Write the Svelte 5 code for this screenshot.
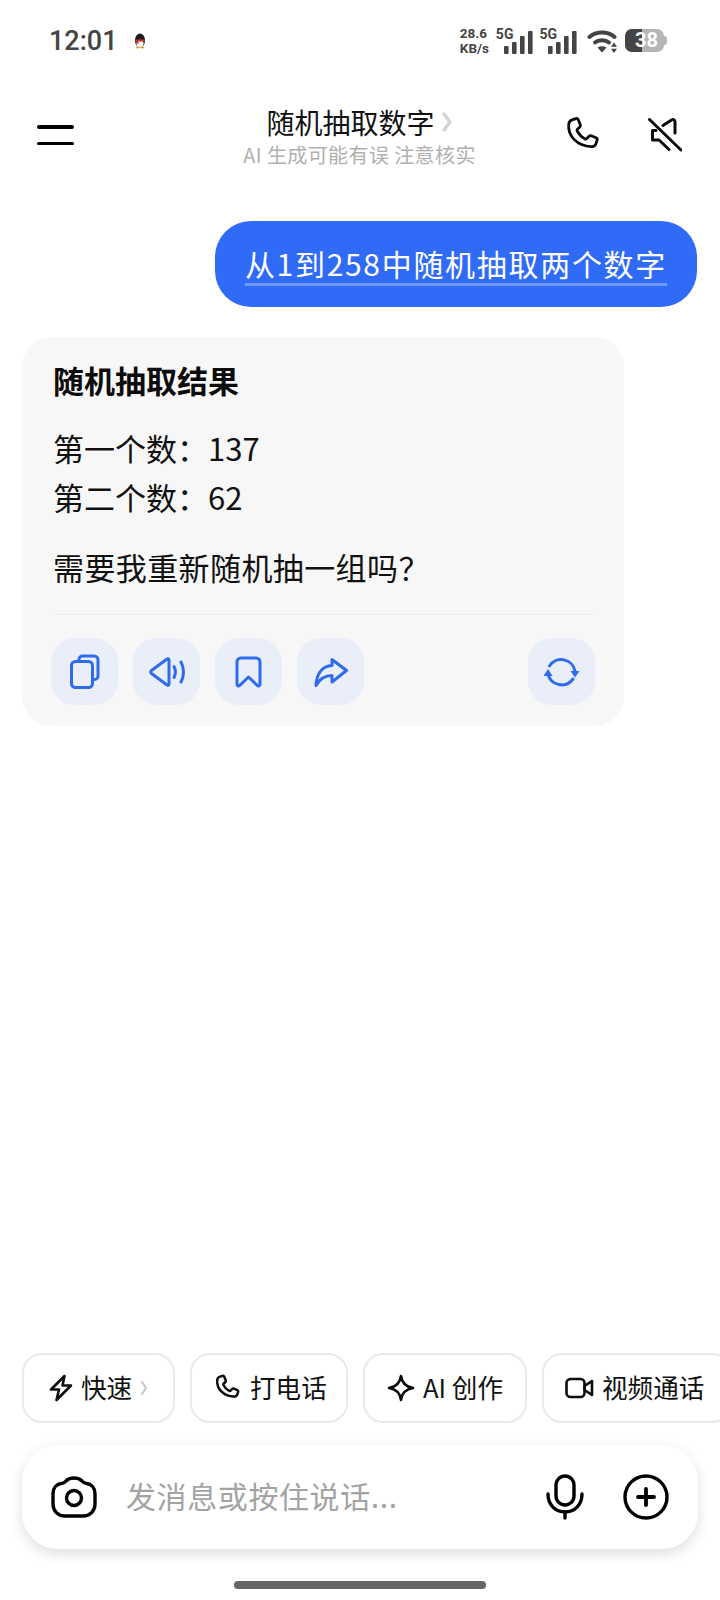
<script lang="ts">
  // Chat screen: status bar, header, conversation, quick chips, composer
  const actions = ['copy', 'speaker', 'bookmark', 'share'];
  const bars = [
    { x: 0, h: 8 },
    { x: 8, h: 12 },
    { x: 16, h: 18 },
    { x: 24, h: 23 }
  ];
</script>

{#snippet signal()}
  <div class="sim">
    <span class="five">5G</span>
    <svg class="bars" width="29" height="23" viewBox="0 0 29 23" fill="#444">
      {#each bars as bar}
        <rect x={bar.x} y={23 - bar.h} width="4.6" height={bar.h} rx="1" />
      {/each}
    </svg>
  </div>
{/snippet}

<div class="screen">
  <div class="status">
    <div class="status-left">
      <span class="time">12:01</span>
      <svg class="qq" width="22" height="22" viewBox="0 0 22 22">
        <circle cx="11" cy="11" r="10.5" fill="#fff" />
        <ellipse cx="11" cy="10.5" rx="5" ry="7" fill="#1c1c1c" />
        <ellipse cx="11" cy="13.6" rx="3.6" ry="3.8" fill="#f6f2ea" />
        <rect x="6" y="9.4" width="10" height="2.2" rx="1" fill="#c5352b" />
        <rect x="7.4" y="11" width="2" height="2.6" fill="#c5352b" />
        <ellipse cx="8.6" cy="17.6" rx="2" ry="0.9" fill="#e0a030" />
        <ellipse cx="13.4" cy="17.6" rx="2" ry="0.9" fill="#e0a030" />
      </svg>
    </div>
    <div class="status-right">
      <div class="speed"><span>28.6</span><span>KB/s</span></div>
      {@render signal()}
      {@render signal()}
      <svg class="wifi" width="30" height="24" viewBox="0 0 30 24" fill="none" stroke="#444" stroke-width="4" stroke-linecap="round">
        <path d="M2.500 8C9 2 21 2 27.500 8" />
        <path d="M8 13.500C11.500 10.500 18.500 10.500 22 13.500" />
        <path d="M15 23.500l-4.500-5c2.700-1.800 6.300-1.800 9 0z" fill="#444" stroke="none" />
        <path d="M27 13.500l3 4.200h-6zM27 24l3-4.200h-6z" fill="#444" stroke="none" />
      </svg>
      <div class="battery"><span class="fill"></span><span class="level">38</span><span class="nub"></span></div>
    </div>
  </div>

  <header class="topbar">
    <button class="menu" aria-label="菜单"><span></span><span></span></button>
    <div class="heading">
      <div class="title">随机抽取数字<svg width="12" height="22" viewBox="0 0 12 22" fill="none" stroke="#d4d4d4" stroke-width="3.400" stroke-linecap="round" stroke-linejoin="round"><path d="M3 3l6 8-6 8" /></svg></div>
      <div class="subtitle">AI 生成可能有误 注意核实</div>
    </div>
    <div class="top-actions">
      <svg width="38" height="38" viewBox="0 0 38 38" fill="none" stroke="#0c0c0c" stroke-width="2.800" stroke-linejoin="round"><path d="M9.600 3.600l3.400-1c1-.3 1.900.2 2.300 1.100l2 5c.3.8.1 1.600-.5 2.200l-2.400 2.300c-.5.5-.6 1.100-.3 1.700 1.900 3.700 4.400 6.200 8 8 .6.300 1.200.2 1.700-.3l2.300-2.400c.6-.6 1.500-.7 2.200-.4l4.700 2c1 .4 1.400 1.400 1.100 2.400l-1 3.200c-.7 2.100-2.600 3.500-4.800 3.300C14 30 4.700 20 5.700 8.400c.2-2.300 1.800-4.200 3.900-4.800z" /></svg>
      <svg width="34" height="34" viewBox="0 0 34 34" fill="none" stroke="#0c0c0c" stroke-width="3" stroke-linecap="round" stroke-linejoin="round"><path d="M1.500 1.500L33 32" /><path d="M15 7.500l8.500-5.500c1.800-1 3.500 0 3.500 2v11" /><path d="M8 12.500H4.500V22H11l10 9.500" /></svg>
    </div>
  </header>

  <main class="chat">
    <div class="bubble"><span>从1到258中随机抽取两个数字</span></div>

    <section class="answer">
      <h2>随机抽取结果</h2>
      <div class="lines">
        <p>第一个数：137</p>
        <p>第二个数：62</p>
      </div>
      <p class="ask">需要我重新随机抽一组吗？</p>
      <div class="divider"></div>
      <div class="toolbar">
        {#each actions as name}
          <button class="tool" aria-label={name}>
            {#if name === 'copy'}
              <svg width="30" height="35" viewBox="0 0 30 35" fill="none" stroke="#2f6bed" stroke-width="3" stroke-linejoin="round" stroke-linecap="round"><rect x="1.500" y="7.500" width="21" height="26" rx="4" /><path d="M9 7.500V5.500A3.500 3.500 0 0 1 12.500 2H24a4 4 0 0 1 4 4v16a3.500 3.500 0 0 1-3.500 3.500h-2" /></svg>
            {:else if name === 'speaker'}
              <svg width="36" height="32" viewBox="0 0 36 32" fill="none" stroke="#2f6bed" stroke-width="3" stroke-linejoin="round" stroke-linecap="round"><path d="M2.500 14.500L18 3c1-.6 2 0 2 1v24c0 1-1 1.600-2 1L2.500 17.500c-1-.8-1-2.200 0-3z" /><path d="M25 10.500c1.800 3.500 1.800 7.500 0 11" /><path d="M32 6c3.300 6 3.300 14 0 20" /></svg>
            {:else if name === 'bookmark'}
              <svg width="27" height="32" viewBox="0 0 27 32" fill="none" stroke="#2f6bed" stroke-width="3" stroke-linejoin="round" stroke-linecap="round"><path d="M2 6a4 4 0 0 1 4-4h15a4 4 0 0 1 4 4v22c0 2-1.500 2.500-2.800 1.300L13.500 21 4.800 29.300C3.500 30.500 2 30 2 28z" /></svg>
            {:else}
              <svg width="34" height="30" viewBox="0 0 34 30" fill="none" stroke="#2f6bed" stroke-width="3" stroke-linejoin="round" stroke-linecap="round"><path d="M18 2.500L32.500 13.500 18 25v-6.500C11 18.500 6 21.500 2 28.500 2.500 17 8 9 18 8.500z" /></svg>
            {/if}
          </button>
        {/each}
        <button class="tool refresh" aria-label="refresh">
          <svg width="38" height="32" viewBox="0 0 38 32" fill="none" stroke="#2f6bed" stroke-width="3" stroke-linecap="round"><path d="M6.500 10A14 14 0 0 1 32 15" /><path d="M30 23A14 14 0 0 1 5 18" /><path d="M27.500 15h9l-4.500 6.500zM.5 20h9L5 13z" fill="#2f6bed" stroke="none" /></svg>
        </button>
      </div>
    </section>
  </main>

  <div class="chips">
    <div class="chip fast">
      <svg width="24" height="28" viewBox="0 0 24 28" fill="none" stroke="#0c0c0c" stroke-width="2.600" stroke-linejoin="round"><path d="M15.500 2L2 15.500h8l-2.500 10.500L22 11.500h-8.500z" /></svg>
      <span>快速</span>
      <svg class="more" width="8" height="16" viewBox="0 0 8 16" fill="none" stroke="#c9c9c9" stroke-width="2.200" stroke-linecap="round" stroke-linejoin="round"><path d="M2 2l4 6-4 6" /></svg>
    </div>
    <div class="chip call">
      <svg width="28" height="28" viewBox="0 0 38 38" fill="none" stroke="#0c0c0c" stroke-width="3.400" stroke-linejoin="round"><path d="M9.600 3.600l3.400-1c1-.3 1.900.2 2.300 1.100l2 5c.3.8.1 1.600-.5 2.200l-2.400 2.300c-.5.5-.6 1.100-.3 1.700 1.900 3.700 4.400 6.200 8 8 .6.300 1.200.2 1.700-.3l2.300-2.400c.6-.6 1.500-.7 2.200-.4l4.700 2c1 .4 1.400 1.400 1.100 2.400l-1 3.200c-.7 2.100-2.600 3.500-4.800 3.300C14 30 4.700 20 5.700 8.400c.2-2.300 1.800-4.200 3.900-4.800z" /></svg>
      <span>打电话</span>
    </div>
    <div class="chip create">
      <svg width="28" height="28" viewBox="0 0 28 28" fill="none" stroke="#0c0c0c" stroke-width="2.600" stroke-linejoin="round"><path d="M14 2c1 7 4.500 11 12 12-7.500 1-11 5-12 12-1-7-4.500-11-12-12 7.500-1 11-5 12-12z" /></svg>
      <span>AI 创作</span>
    </div>
    <div class="chip video">
      <svg width="29" height="22" viewBox="0 0 29 22" fill="none" stroke="#0c0c0c" stroke-width="2.600" stroke-linejoin="round"><rect x="1.500" y="2" width="18" height="18" rx="4" /><path d="M19.500 9l7.500-5v14l-7.500-5z" /></svg>
      <span>视频通话</span>
    </div>
  </div>

  <div class="composer">
    <svg width="46" height="42" viewBox="0 0 46 42" fill="none" stroke="#000" stroke-width="3.400" stroke-linejoin="round"><path d="M15 5C17 2.800 20 2 23 2s6 .8 8 3c1.200 1.500 2 2 4 2.300C40.500 8 44 12 44 17.500V28c0 7-5 12-12 12H14C7 40 2 35 2 28V17.500C2 12 5.500 8 11 7.300c2-.3 2.800-.8 4-2.300z" /><circle cx="23" cy="22" r="7.500" /></svg>
    <span class="placeholder">发消息或按住说话...</span>
    <svg class="mic" width="38" height="46" viewBox="0 0 38 46" fill="none" stroke="#000" stroke-width="3.400" stroke-linecap="round"><rect x="10" y="2" width="18" height="29" rx="9" /><path d="M2 20c0 11 7.500 18 17 18s17-7 17-18" /><path d="M19 38v6" /></svg>
    <svg class="plus" width="46" height="46" viewBox="0 0 46 46" fill="none" stroke="#000" stroke-width="3.400" stroke-linecap="round"><circle cx="23" cy="23" r="21" /><path d="M23 15v16M15 23h16" stroke-width="3.800" /></svg>
  </div>

  <div class="home"></div>
</div>

<style>
  :global(body) {
    margin: 0;
    background: #fff;
  }

  .screen {
    width: 720px;
    height: 1600px;
    display: flex;
    flex-direction: column;
    overflow: hidden;
    background: #fff;
    font-family: "Noto Sans CJK SC", "Noto Sans", sans-serif;
    color: #111;
  }

  .status {
    height: 80px;
    flex: none;
    display: flex;
    align-items: center;
    justify-content: space-between;
    padding: 1px 56px 0 49px;
    box-sizing: border-box;
  }

  .status-left,
  .status-right {
    display: flex;
    align-items: center;
  }

  .time {
    font-family: Roboto, sans-serif;
    font-size: 27px;
    font-weight: 500;
    color: #444;
  }

  .qq {
    margin-left: 11px;
  }

  .speed {
    display: flex;
    flex-direction: column;
    width: 31px;
    font-family: Roboto, sans-serif;
    font-size: 13.500px;
    line-height: 15px;
    font-weight: 700;
    color: #444;
    white-space: nowrap;
  }

  .sim {
    display: flex;
    align-items: flex-start;
    height: 26px;
    margin-left: 5px;
  }

  .five {
    font-family: Roboto, sans-serif;
    font-size: 14px;
    line-height: 13px;
    font-weight: 700;
    color: #444;
    margin-right: -9px;
  }

  .bars {
    margin-top: 3px;
  }

  .sim + .sim {
    margin-left: 6px;
  }

  .wifi {
    margin-left: 10px;
  }

  .battery {
    position: relative;
    width: 39px;
    height: 23px;
    border-radius: 7px;
    background: #b5b5b5;
    margin-left: 8px;
  }

  .fill {
    position: absolute;
    left: 0;
    top: 0;
    bottom: 0;
    width: 17px;
    border-radius: 7px 0 0 7px;
    background: #444;
  }

  .level {
    position: absolute;
    inset: 0;
    padding-left: 10px;
    text-align: left;
    font-family: Roboto, sans-serif;
    font-size: 20px;
    line-height: 23px;
    font-weight: 700;
    color: #fff;
  }

  .nub {
    position: absolute;
    right: -3px;
    top: 7px;
    width: 3px;
    height: 9px;
    border-radius: 0 3px 3px 0;
    background: #b5b5b5;
  }

  .topbar {
    height: 110px;
    flex: none;
    display: grid;
    grid-template-columns: 1fr auto 1fr;
    align-items: center;
    padding: 0 38px 0 37px;
    box-sizing: border-box;
  }

  .menu {
    width: 37px;
    height: 20px;
    padding: 0;
    border: 0;
    background: none;
    display: flex;
    flex-direction: column;
    justify-content: space-between;
  }

  .menu span {
    display: block;
    height: 3.500px;
    border-radius: 2px;
    background: #000;
  }

  .heading {
    display: flex;
    flex-direction: column;
    align-items: center;
    margin-top: 2px;
  }

  .title {
    display: flex;
    align-items: center;
    gap: 6px;
    font-size: 28px;
    line-height: 36px;
    color: #111;
  }

  .subtitle {
    font-size: 20px;
    line-height: 29px;
    letter-spacing: 0.4px;
    color: #b0b0b0;
  }

  .top-actions {
    display: flex;
    justify-content: flex-end;
    align-items: center;
    gap: 47px;
  }

  .chat {
    flex: 1;
    display: flex;
    flex-direction: column;
    padding: 31px 23px 0 22px;
  }

  .bubble {
    align-self: flex-end;
    height: 86px;
    box-sizing: border-box;
    padding: 0 30px;
    border-radius: 36px;
    background: #2f6bf6;
    color: #fff;
    font-size: 30px;
    letter-spacing: 1.700px;
    display: flex;
    align-items: center;
  }

  .bubble span {
    line-height: 40px;
    border-bottom: 3px solid #6e98f8;
  }

  .answer {
    width: 602px;
    margin-top: 30px;
    padding: 20px 29px 21px 31px;
    box-sizing: border-box;
    border-radius: 30px;
    background: #f7f7f7;
    font-size: 31px;
  }

  h2 {
    margin: 0;
    font-size: 31px;
    font-weight: 700;
    line-height: 46px;
    color: #0c0c0c;
  }

  p {
    margin: 0;
    line-height: 49px;
  }

  .lines {
    margin-top: 20px;
  }

  .ask {
    margin-top: 21px;
    letter-spacing: 0.4px;
  }

  .divider {
    height: 1px;
    background: #ececec;
    margin-top: 23px;
  }

  .toolbar {
    display: flex;
    gap: 15px;
    margin: 23px 0 0 -2px;
  }

  .tool {
    width: 67px;
    height: 67px;
    padding: 0;
    border: 0;
    border-radius: 24px;
    background: #e9eef8;
    display: flex;
    align-items: center;
    justify-content: center;
  }

  .refresh {
    margin-left: auto;
  }

  .chips {
    flex: none;
    display: flex;
    gap: 15px;
    padding-left: 22px;
  }

  .chip {
    flex: none;
    height: 70px;
    box-sizing: border-box;
    display: flex;
    align-items: center;
    border: 2px solid #e9e9e9;
    border-radius: 20px;
    background: #fff;
    font-size: 25.600px;
    color: #111;
  }

  .chip span {
    white-space: nowrap;
    margin-top: -4px;
  }

  .fast {
    width: 153px;
    padding-left: 25px;
    gap: 8px;
  }

  .more {
    margin-left: 0;
  }

  .call {
    width: 158px;
    padding-left: 21px;
    gap: 9px;
  }

  .create {
    width: 164px;
    padding-left: 22px;
    gap: 8px;
  }

  .video {
    width: 190px;
    padding-left: 21px;
    gap: 8px;
  }

  .composer {
    flex: none;
    margin: 22px 22px 0;
    height: 104px;
    box-sizing: border-box;
    display: flex;
    align-items: center;
    padding: 0 29px 0 29px;
    border-radius: 36px;
    background: #fff;
    box-shadow: 0 5px 14px rgba(0, 0, 0, 0.13);
  }

  .placeholder {
    flex: 1;
    margin-top: -4px;
    margin-left: 29px;
    font-size: 30px;
    letter-spacing: 0.6px;
    color: #a3a3a3;
  }

  .plus {
    margin-left: 39px;
  }

  .home {
    flex: none;
    width: 252px;
    height: 8px;
    margin: 32px auto 11px;
    border-radius: 4px;
    background: #666;
  }
</style>
